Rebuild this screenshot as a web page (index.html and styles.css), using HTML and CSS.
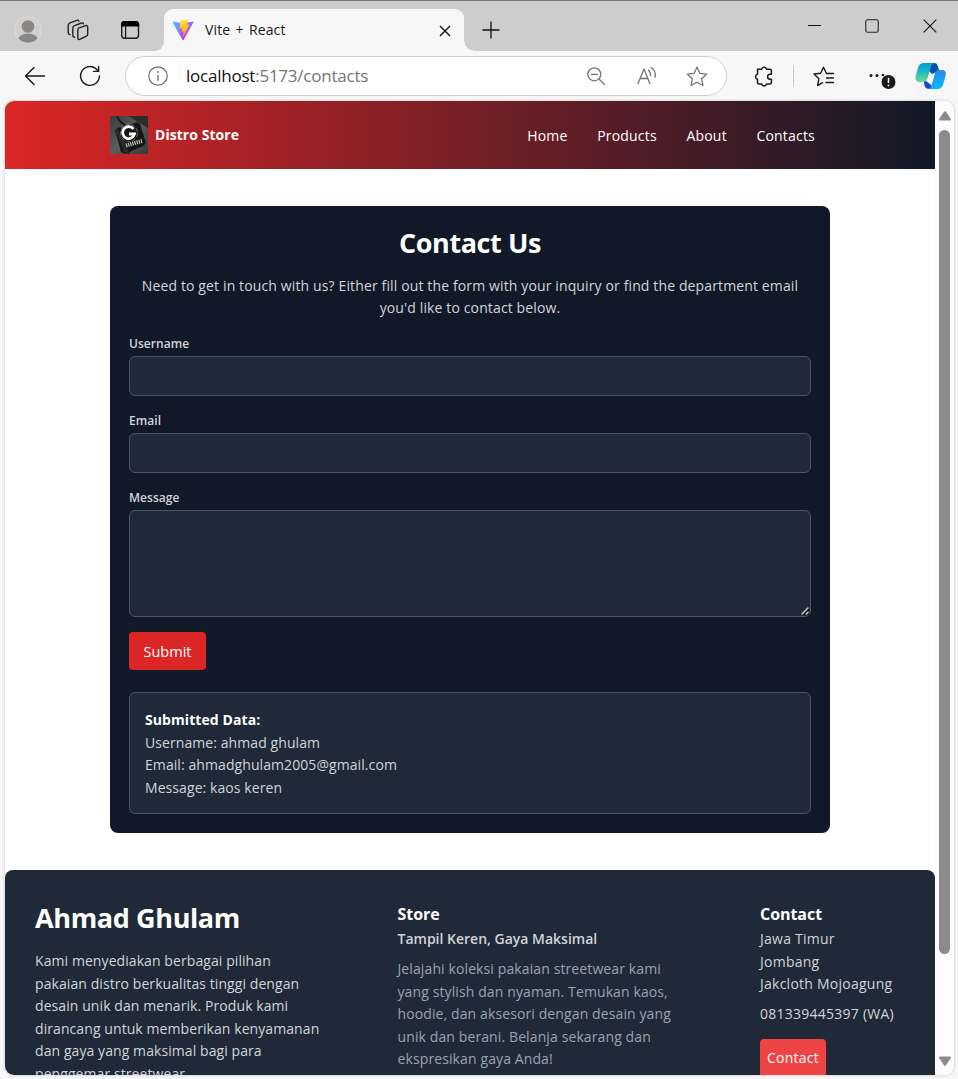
FILE: index.html
```html
<!DOCTYPE html>
<html lang="en">
<head>
<meta charset="utf-8">
<title>Vite + React</title>
<link rel="stylesheet" href="styles.css">
</head>
<body>
<div class="window">
  <header class="tabbar">
    <div class="tab-tools">
      <svg width="28" height="28" viewBox="0 0 28 28"><defs><clipPath id="av"><circle cx="14" cy="14" r="12.8"/></clipPath></defs><circle cx="14" cy="14" r="13.2" fill="#d2d0ce" stroke="#dddbd8" stroke-width="1"/><g clip-path="url(#av)" fill="#8a8886"><circle cx="14" cy="10.5" r="6.3"/><ellipse cx="14" cy="25" rx="10.5" ry="7.5"/></g></svg>
      <svg width="22" height="22" viewBox="0 0 22 22" fill="none" stroke="#222" stroke-width="1.4" stroke-linejoin="round" stroke-linecap="round"><path d="M11.4 9.1l7.2-2.4q2.1-.6 2.1 1.5v7.2q0 1.3-1.3 1.8l-6.2 3q-2.4 1-2.4-1.3v-7.4q0-1.7 .6-2.4z"/><path d="M7.5 18.2q-1.7-.1-1.7-1.9V9.2q0-1.9 1.7-2.6L14.5 4q1.6-.5 2 .8"/><path d="M3 15.6q-1.8-.2-1.8-2V6.5q0-1.9 1.7-2.6L9.8 1.3q1.6-.5 2 .8"/></svg>
      <svg width="20" height="20" viewBox="0 0 20 20"><rect x="1.7" y="1.7" width="16.8" height="16.6" rx="3" fill="none" stroke="#1b1b1b" stroke-width="1.4"/><path d="M1 6.6V4.5Q1 1 4.5 1h11.2q3.5 0 3.5 3.5v2.1z" fill="#000"/><path d="M5.6 6v12" stroke="#1b1b1b" stroke-width="1.3"/></svg>
    </div>
    <div class="tab">
      <svg class="vite" width="22" height="22" viewBox="0 0 410 404"><defs><linearGradient id="va" x1="6" y1="33" x2="235" y2="344" gradientUnits="userSpaceOnUse"><stop stop-color="#41d1ff"/><stop offset="1" stop-color="#bd34fe"/></linearGradient><linearGradient id="vb" x1="194" y1="9" x2="236" y2="293" gradientUnits="userSpaceOnUse"><stop stop-color="#ffea83"/><stop offset=".083" stop-color="#ffdd35"/><stop offset="1" stop-color="#ffa800"/></linearGradient></defs><path fill="url(#va)" d="M399.641 59.525L215.643 388.545c-3.799 6.793-13.559 6.833-17.415.073L10.582 59.556C6.381 52.19 12.68 43.267 21.028 44.76l184.195 32.923c1.175.21 2.378.208 3.553-.006l180.343-32.87c8.32-1.517 14.649 7.337 10.522 14.719z"/><path fill="url(#vb)" d="M292.965 1.574L156.801 28.255a5 5 0 00-4.03 4.611l-8.376 141.464c-.197 3.332 2.863 5.918 6.115 5.168l37.91-8.749c3.547-.818 6.752 2.306 6.023 5.873l-11.263 55.153c-.758 3.712 2.727 6.886 6.352 5.785l23.415-7.114c3.63-1.102 7.118 2.081 6.35 5.796l-17.899 86.633c-1.12 5.419 6.088 8.374 9.094 3.728l2.008-3.103 110.954-221.428c1.858-3.707-1.346-7.935-5.418-7.15l-39.022 7.532c-3.667.707-6.787-2.708-5.752-6.296l25.469-88.291c1.036-3.594-2.095-7.012-5.766-6.293z"/></svg>
      <span class="tab-title">Vite + React</span>
      <svg class="tab-close" width="12" height="12" viewBox="0 0 12 12"><path d="M1 1l10 10M11 1L1 11" stroke="#111" stroke-width="1.4"/></svg>
    </div>
    <svg class="new-tab" width="18" height="18" viewBox="0 0 18 18"><path d="M9 .5v17M.5 9h17" stroke="#111" stroke-width="1.3"/></svg>
    <div class="controls">
      <svg width="14" height="14" viewBox="0 0 14 14"><path d="M1 6.500h13" stroke="#111"/></svg>
      <svg width="14" height="14" viewBox="0 0 14 14"><rect x=".8" y=".8" width="12.4" height="12.4" rx="1.8" fill="none" stroke="#222" stroke-width="1.1"/></svg>
      <svg width="14" height="14" viewBox="0 0 14 14"><path d="M.7.7l12.6 12.6M13.3.7L.7 13.3" stroke="#111" stroke-width="1.1"/></svg>
    </div>
  </header>

  <div class="toolbar">
    <svg class="back" width="22" height="20" viewBox="0 0 22 20" fill="none" stroke="#1a1a1a" stroke-width="1.4" stroke-linecap="round" stroke-linejoin="round"><path d="M20.5 10H1.5M10 1.5L1.5 10l8.500 8.500"/></svg>
    <svg class="reload" width="22" height="22" viewBox="0 0 22 22" fill="none" stroke="#1a1a1a" stroke-width="1.4" stroke-linecap="round" stroke-linejoin="round"><path d="M20.400 11A9.400 9.400 0 1 1 16.600 3.400L19.600 6.300M19.600 1.400v5h-5"/></svg>
    <div class="address">
      <svg class="info" width="20" height="20" viewBox="0 0 20 20"><circle cx="10" cy="10" r="9.2" fill="none" stroke="#6f6f6f" stroke-width="1.2"/><path d="M10 8.700v6" stroke="#6f6f6f" stroke-width="1.3"/><circle cx="10" cy="6" r=".9" fill="#6f6f6f"/></svg>
      <span class="url">localhost<span class="url-rest">:5173/contacts</span></span>
      <svg class="zoom" width="18" height="18" viewBox="0 0 18 18" fill="none" stroke="#747474" stroke-width="1.3" stroke-linecap="round"><circle cx="7.300" cy="7.300" r="6.500"/><path d="M12 12l5.300 5.300M4.200 7.300h6.200"/></svg>
      <svg class="aloud" width="20" height="20" viewBox="0 0 20 20" fill="none" stroke="#747474" stroke-width="1.3" stroke-linecap="round" stroke-linejoin="round"><path d="M1 17.500L7 3l5.800 14.500M3.100 12.500h7.800M11.500 4.200q2.400 1.800 2 5.200M14 1.500q5.200 3.200 4.200 9.500"/></svg>
      <svg class="fav" width="22" height="21" viewBox="0 0 22 21" fill="none" stroke="#747474" stroke-width="1.3" stroke-linejoin="round"><path d="M11 1.200l2.900 6.100 6.700.9-4.900 4.600 1.200 6.700-5.900-3.300-5.900 3.300 1.200-6.700L1.400 8.200l6.700-.9z"/></svg>
    </div>
    <svg class="puzzle" width="20" height="21" viewBox="0 0 20 21" fill="none" stroke="#1a1a1a" stroke-width="1.500" stroke-linejoin="round"><path d="M3.500 3.200h4.100a2.600 2.600 0 0 1 5 0h3.200q1.600 0 1.600 1.600v3.400h-1.300a2.500 2.500 0 0 0 0 5h1.300v3.200q0 1.600-1.600 1.600h-3.200a2.600 2.600 0 0 1-5 0H5.100q-1.600 0-1.600-1.600v-3.100a2.700 2.700 0 0 1 0-5.200V4.500z"/></svg>
    <span class="divider"></span>
    <svg class="favorites" width="22" height="21" viewBox="0 0 22 21" fill="none" stroke="#1a1a1a" stroke-width="1.400" stroke-linejoin="round" stroke-linecap="round"><path d="M20.500 7.500h-7L10.500 1.200 7.600 7.200l-6.600.8 4.900 4.800-1.300 6.800 5-2.900M13.500 12h7M13 16.500h7.500"/></svg>
    <svg class="more" width="28" height="26" viewBox="0 0 28 26"><g fill="#1a1a1a"><circle cx="3" cy="10.500" r="1.500"/><circle cx="9" cy="10.500" r="1.500"/><circle cx="15" cy="10" r="1.300"/></g><circle cx="20.500" cy="17" r="7" fill="#1b1b1b"/><path d="M20.500 12.700v5.300" stroke="#fff" stroke-width="1.500"/><circle cx="20.500" cy="20.500" r=".9" fill="#fff"/></svg>
    <svg class="copilot" width="31" height="28" viewBox="0 0 30 28" preserveAspectRatio="none"><defs><linearGradient id="ca" x1="0" y1="0" x2="0" y2="1"><stop stop-color="#079bd1"/><stop offset=".5" stop-color="#20bcc9"/><stop offset="1" stop-color="#72db82"/></linearGradient><linearGradient id="cb" x1="0" y1="0" x2="0" y2="1"><stop stop-color="#288ae8"/><stop offset="1" stop-color="#08b9f8"/></linearGradient></defs><path d="M10 1h9q2.200 0 3 2.700l1.500 5.300-7 3-4-4z" fill="#0754ad"/><path d="M8 18l3.500 1.500L20 27h-6q-3.800 0-4.700-3.200z" fill="#1749d5"/><path d="M8.500 1H19q-2.500 0-3.500 3.500l-3.500 12Q11 20 7.500 20H4.500Q0 20 .5 15L3 5.500Q4.300 1 8.500 1z" fill="url(#ca)"/><path d="M22.500 8h3.700q4.200 0 3.600 5l-2.600 9.500Q26 27 21.500 27H13q2.200-.5 3-3.500l3.300-12Q20.200 8 22.500 8z" fill="url(#cb)"/></svg>
  </div>

  <div class="viewport">
    <div class="page">
      <nav class="navbar">
        <div class="nav-inner">
          <div class="brand">
            <svg width="38" height="38" viewBox="0 0 38 38"><defs><linearGradient id="lg" x1="0" y1="0" x2="1" y2="1"><stop stop-color="#3b3b3b"/><stop offset=".5" stop-color="#5d5c5b"/><stop offset="1" stop-color="#393939"/></linearGradient></defs><path fill="url(#lg)" d="M0 0h38v38H0z"/><path d="M18 0h20v12z" fill="#2c2c2c"/><path d="M7 0q2 6 8 9" fill="none" stroke="#161616" stroke-width="2"/><path d="M5 14l4-3 3 1 15-6 3 2 6 19-3 3-18 8-4-2z" fill="#151716"/><path d="M5 14l9 22 2 2h4L8 13z" fill="#282a29"/><circle cx="19" cy="17" r="8.500" fill="none" stroke="#858783" stroke-width=".8" stroke-dasharray="4 2"/><path d="M23.500 13A6 6 0 1 0 24.500 18H19" fill="none" stroke="#fff" stroke-width="2.800"/><path d="M16 29.500l16-4.500" stroke="#bab9a8" stroke-width="4" stroke-dasharray="1.300 .9"/></svg>
            <span class="brand-name">Distro Store</span>
          </div>
          <div class="links"><a>Home</a><a>Products</a><a>About</a><a>Contacts</a></div>
        </div>
      </nav>

      <main class="card">
        <h1 class="title">Contact Us</h1>
        <p class="intro">Need to get in touch with us? Either fill out the form with your inquiry or find the department email<br>you'd like to contact below.</p>
        <form class="form">
          <label class="label">Username</label>
          <div class="field"></div>
          <label class="label">Email</label>
          <div class="field"></div>
          <label class="label">Message</label>
          <div class="field area"><svg width="9" height="9" viewBox="0 0 9 9"><path d="M0 9L9 0v9z" fill="#080b0f"/><path d="M1.500 8.500l7-7M5.800 8.500l2.700-2.700" stroke="#d0d0d0" stroke-width="1.500"/></svg></div>
          <button class="submit" type="button">Submit</button>
        </form>
        <section class="result">
          <h2 class="result-title">Submitted Data:</h2>
          <p>Username: ahmad ghulam</p>
          <p>Email: ahmadghulam2005@gmail.com</p>
          <p>Message: kaos keren</p>
        </section>
      </main>

      <footer class="footer">
        <div class="col">
          <h2 class="title owner">Ahmad Ghulam</h2>
          <p class="about">Kami menyediakan berbagai pilihan<br>pakaian distro berkualitas tinggi dengan<br>desain unik dan menarik. Produk kami<br>dirancang untuk memberikan kenyamanan<br>dan gaya yang maksimal bagi para<br>penggemar streetwear.</p>
        </div>
        <div class="col">
          <h3 class="col-title">Store</h3>
          <p class="tagline">Tampil Keren, Gaya Maksimal</p>
          <p class="muted">Jelajahi koleksi pakaian streetwear kami<br>yang stylish dan nyaman. Temukan kaos,<br>hoodie, dan aksesori dengan desain yang<br>unik dan berani. Belanja sekarang dan<br>ekspresikan gaya Anda!</p>
        </div>
        <div class="col address-col">
          <h3 class="col-title">Contact</h3>
          <p>Jawa Timur</p><p>Jombang</p><p>Jakcloth Mojoagung</p>
          <p class="phone">081339445397 (WA)</p>
          <a class="contact-btn">Contact</a>
        </div>
      </footer>
    </div>
    <div class="scrollbar">
      <svg width="12" height="10" viewBox="0 0 12 10"><path d="M5 .8q1-1.200 2 0l4.700 7q.7 1.700-1 1.700H1.300q-1.700 0-1-1.700z" fill="#8b8b8b"/></svg>
      <span class="thumb"></span>
      <svg class="down" width="12" height="10" viewBox="0 0 12 10"><path d="M5 9.200q1 1.200 2 0l4.700-7Q12.400.5 10.700.5H1.300Q-.4.5.3 2.200z" fill="#8b8b8b"/></svg>
    </div>
  </div>
</div>
</body>
</html>
```
FILE: styles.css
```css
* { box-sizing: border-box; }
body, h1, h2, h3, p { margin: 0; }
body { font-family: "Open Sans", "Noto Sans", sans-serif; overflow: hidden; }
svg { display: block; flex: none; }

.window { width: 958px; height: 1079px; display: flex; flex-direction: column; background: #f7f7f7; overflow: hidden; white-space: nowrap; }

.tabbar { height: 51px; flex: none; display: flex; background: #cdcdcd; border-top: 1px solid #777; padding-top: 8px; }
.tab-tools { width: 164px; padding: 7px 0 0 14px; height: 42px; display: flex; align-items: flex-start; background: linear-gradient(#f7f7f7, #f7f7f7) right bottom / 10px 10px no-repeat; position: relative; }
.tab-tools::before { content: ""; position: absolute; right: 0; bottom: 0; width: 10px; height: 10px; background: #cdcdcd; border-bottom-right-radius: 9px; }
.tab-tools svg { position: relative; }
.tab-tools svg:nth-child(2) { margin: 3px 0 0 25px; }
.tab-tools svg:nth-child(3) { margin: 4px 0 0 31px; }
.tab { width: 300px; height: 42px; display: flex; align-items: center; background: #f7f7f7; border-radius: 9px 9px 0 0; position: relative; }
.tab::after { content: ""; position: absolute; left: 300px; bottom: 0; width: 10px; height: 10px; background: radial-gradient(circle at 100% 0, #cdcdcd 9px, #f7f7f7 10px); }
.vite { margin-left: 8px; }
.tab-title { margin: -2px 0 0 11px; font-size: 14px; color: #1a1a1a; word-spacing: 1.5px; letter-spacing: .13px; }
.tab-close { margin: 1px 13px 0 auto; }
.new-tab { margin: 12px 0 0 18px; }
.controls { display: flex; gap: 44px; margin: 10px 21px 0 auto; }

.toolbar { height: 50px; flex: none; display: flex; align-items: center; }
.back { margin-left: 24px; }
.reload { margin-left: 33px; }
.address { width: 602px; height: 40px; margin-left: 24px; border: 1px solid #cfcfcf; border-radius: 20px; background: #fff; display: flex; align-items: center; }
.info { margin-left: 22px; }
.url { margin: -2px 0 0 18px; font-size: 17px; color: #111; letter-spacing: -.23px; }
.url-rest { color: #757575; }
.zoom { margin-left: auto; }
.aloud { margin-left: 32px; }
.fav { margin: 0 18px 0 29px; }
.puzzle { margin-left: 27px; }
.divider { width: 1px; height: 20px; margin-left: 19px; background: #c6c6c6; }
.favorites { margin-left: 19px; }
.more { margin: 4px 0 0 33px; }
.copilot { margin-left: 19px; }

.viewport { width: 949px; height: 974px; margin-left: 5px; flex: none; display: flex; overflow: hidden; border-radius: 9px; background: #fff; box-shadow: 0 0 3px #bbb; }
.page { width: 930px; font-size: 14px; line-height: 22.5px; color: #d1d5db; letter-spacing: .08px; }
.scrollbar { width: 19px; background: #fcfcfc; display: flex; flex-direction: column; align-items: center; padding: 10px 0; }
.thumb { width: 11px; height: 824px; margin-top: 9px; border-radius: 6px; background: #8b8b8b; }
.down { margin-top: auto; margin-bottom: -1px; }

.navbar { height: 68px; background: linear-gradient(to right, #dc2626, #111827); padding: 0 105px; }
.nav-inner { height: 68px; display: flex; align-items: center; justify-content: space-between; padding-right: 15px; color: #fff; }
.brand { display: flex; align-items: center; gap: 7px; }
.brand-name { font-weight: 700; letter-spacing: .05px; padding-top: 1px; }
.links { display: flex; gap: 29.6px; letter-spacing: .2px; padding-top: 2px; }

.card { width: 720px; height: 627px; margin: 37px 105px; padding: 20px 19px 19px; background: #111827; border-radius: 8px; }
.title { font-size: 27px; line-height: 34px; font-weight: 700; color: #fff; text-align: center; letter-spacing: -.4px; }
.intro { margin-top: 14.5px; text-align: center; height: 45px; letter-spacing: .13px; }
.form { display: flex; flex-direction: column; align-items: flex-start; margin-top: 14.5px; }
.label { font-size: 12px; line-height: 19px; font-weight: 600; margin-bottom: 3px; letter-spacing: .05px; }
.field { width: 682px; height: 40px; margin-bottom: 15px; border: 1px solid #4b5563; border-radius: 6px; background: #1f2937; }
.area { height: 107px; display: flex; align-items: flex-end; justify-content: flex-end; padding: 1px; }
.submit { width: 77px; height: 38px; border: 0; padding: 0; border-radius: 4px; background: #dc2626; color: #fff; font: 14.5px "Open Sans", sans-serif; }
.result { width: 682px; height: 122px; margin-top: 22px; padding: 16px 15px 14px; border: 1px solid #4b5563; border-radius: 6px; background: #1f2937; }
.result-title { font-size: 14px; font-weight: 700; color: #fff; }

.footer { height: 260px; display: grid; grid-template-columns: 362.5px 362.5px 1fr; padding: 31px 0 0 30px; background: #1f2937; border-radius: 8px; }
.owner { text-align: left; margin-bottom: 15px; letter-spacing: -.37px; }
.col-title { font-size: 16px; line-height: 26px; margin-bottom: 1px; font-weight: 700; color: #fff; letter-spacing: -.05px; }
.tagline { font-weight: 600; letter-spacing: 0; }
.muted { margin-top: 7.5px; color: #9ca3af; letter-spacing: .11px; }
.address-col { letter-spacing: .25px; }
.phone { margin-top: 7.5px; }
.contact-btn { display: block; width: 66px; height: 38px; margin-top: 13px; line-height: 38px; text-align: center; border-radius: 4px; background: #ef4444; color: #fff; }
```
